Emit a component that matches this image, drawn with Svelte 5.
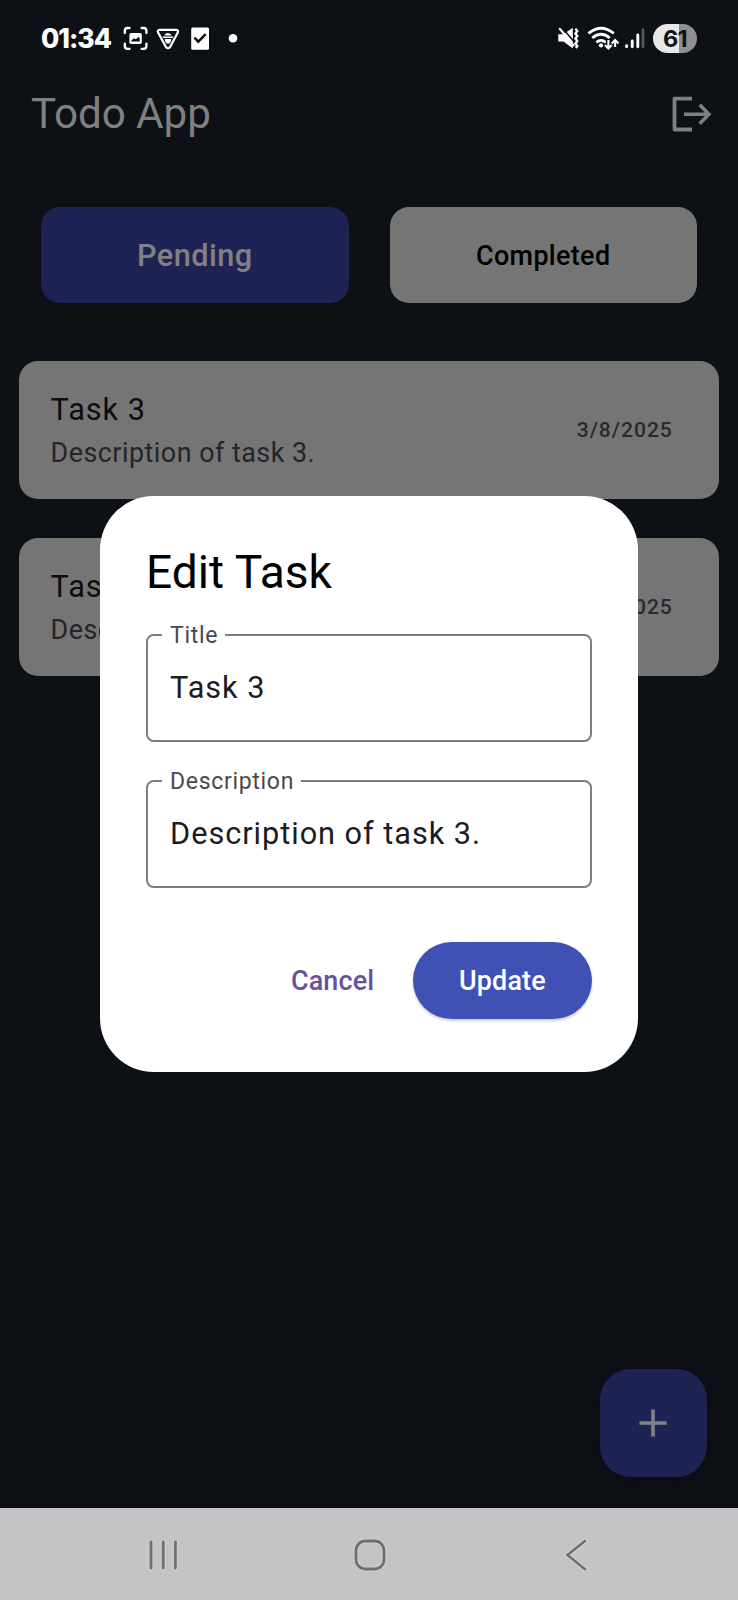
<script>
  const tasks = [
    { title: 'Task 3', description: 'Description of task 3.', date: '3/8/2025' },
    { title: 'Task 2', description: 'Description of task 2.', date: '3/8/2025' }
  ];
  const fields = [
    { label: 'Title', value: 'Task 3' },
    { label: 'Description', value: 'Description of task 3.' }
  ];
</script>

<div class="screen">
  <div class="status">
    <span class="clock">01:34</span>
    <svg class="notif" width="130" height="36" viewBox="120 20 130 36" fill="none" stroke="#fff">
      <path stroke-width="2.3" stroke-linecap="round" d="M124.8 33v-2.2a2.8 2.8 0 0 1 2.8-2.8h2M141.6 28h2a2.8 2.8 0 0 1 2.8 2.8V33M146.4 43.6v2.4a2.8 2.8 0 0 1-2.8 2.8h-2M129.6 48.8h-2a2.8 2.8 0 0 1-2.8-2.8v-2.4" />
      <rect x="129.4" y="33" width="12.4" height="11" rx="1.8" fill="#fff" stroke="none" />
      <path d="M131.4 41.4v-1.2l2.6-2 1.8 1.1 2.6-2.2 1.3 1.2v3.1z" fill="#0d1016" stroke="none" />
      <path stroke-width="2.2" stroke-linejoin="round" d="M159.6 29.8h16.6q2.6.2 1.6 2.7l-7.7 14.6q-2.1 2.3-4.2 0l-7.8-14.6q-1-2.5 1.5-2.7z" />
      <path d="M164.2 35.6q.8-2.4 3.7-2.6 3 .2 3.8 2.6zM162.8 36.6h10.4v1.4h-10.4zM164.6 39h6.8l-.9 3.2q-2.5 3-5 0z" fill="#fff" stroke="none" />
      <rect x="191.2" y="27.4" width="17.8" height="22.4" rx="1.6" fill="#fff" stroke="none" />
      <path stroke="#0d1016" stroke-width="2.5" d="M194.4 37.6l3.9 4 7.4-7.5" />
      <circle cx="233" cy="38.3" r="4.3" fill="#fff" stroke="none" />
    </svg>
    <svg class="radio" width="92" height="36" viewBox="554 20 92 36" fill="none" stroke="#fff">
      <path d="M558.3 34.2h5.2l9.3-6.4v20.6l-9.3-6.8h-5.2z" fill="#fff" stroke="none" />
      <path stroke="#0d1016" stroke-width="1.5" d="M561.8 27.2l13.6 16" />
      <path stroke-width="2.2" stroke-linecap="round" d="M559.8 28.8l13.8 16.6" />
      <path stroke-width="2.3" d="M575.4 28.6l1.9 2.4-1.9 2.5 1.9 2.5-1.9 2.5 1.9 2.5-1.9 2.5 1.9 2.5-1.4 2" />
      <path stroke-width="2.8" d="M588.4 33.4q12.8-10.4 25.4 0M592.3 38q8.8-7.4 17.4 0M596.4 42.4q4.7-4 9.3 0" />
      <circle cx="601" cy="45.4" r="2.1" fill="#fff" stroke="none" />
      <path stroke="#0d1016" stroke-width="4.5" d="M608.4 39.8v7M615.4 38.6v7" />
      <path stroke-width="2.1" d="M608.4 40v7.6M605 45l3.4 3.4 3.4-3.4M615.1 47v-7.2M611.7 43.4l3.4-3.4 3.4 3.4" />
      <path stroke-width="2.9" stroke-linecap="round" d="M626.6 45.6v1.2M632.2 41v5.8M637.8 35v11.8" />
      <path stroke="#55585d" stroke-width="2.7" stroke-linecap="round" d="M643 29.6v17.2" />
    </svg>
    <span class="battery">61</span>
  </div>

  <header>
    <h1>Todo App</h1>
    <svg width="46" height="46" viewBox="668 91 46 46" fill="none" stroke="#7f7f80">
      <path stroke-width="3.8" stroke-linejoin="round" d="M692 98.7h-17.5v30.8H692" />
      <path stroke-width="3.6" d="M684 114.3h24.5M699.7 104.8l9.2 9.5-9.2 9.4" />
    </svg>
  </header>

  <div class="tabs">
    <button class="tab active">Pending</button>
    <button class="tab">Completed</button>
  </div>

  <div class="list">
    {#each tasks as task}
      <article>
        <div>
          <div class="name">{task.title}</div>
          <div class="desc">{task.description}</div>
        </div>
        <time>{task.date}</time>
      </article>
    {/each}
  </div>

  <button class="fab" aria-label="Add">
    <svg width="28" height="28" viewBox="0 0 28 28" stroke="#828285" stroke-width="3.6"><path d="M14 .5v27M.5 14h27" /></svg>
  </button>

  <nav>
    <svg width="34" height="34" viewBox="0 0 34 34" fill="none" stroke-linecap="round">
      <path stroke="#d0d0d2" stroke-width="5" d="M5 4v26M17.2 4v26M29.4 4v26" />
      <path stroke="#6f6f72" stroke-width="2.8" d="M5 4v26M17.2 4v26M29.4 4v26" />
    </svg>
    <svg width="34" height="34" viewBox="0 0 34 34" fill="none">
      <rect x="3" y="3" width="28" height="28" rx="9.4" stroke="#d0d0d2" stroke-width="5" />
      <rect x="3" y="3" width="28" height="28" rx="9.4" stroke="#6f6f72" stroke-width="2.8" />
    </svg>
    <svg width="34" height="34" viewBox="0 0 34 34" fill="none" stroke-linecap="round">
      <path stroke="#d0d0d2" stroke-width="5" d="M26 3L8.5 17 26 31.2" />
      <path stroke="#6f6f72" stroke-width="2.5" d="M26 3L8.5 17 26 31.2" />
    </svg>
  </nav>

  <div class="overlay">
    <div class="dialog">
      <h2>Edit Task</h2>
      <div class="fields">
        {#each fields as field}
          <div class="field">
            <span class="label">{field.label}</span>
            <span class="value">{field.value}</span>
          </div>
        {/each}
      </div>
      <div class="actions">
        <button class="cancel">Cancel</button>
        <button class="update">Update</button>
      </div>
    </div>
  </div>
</div>

<style>
  :global(body) { margin: 0; background: #0d1015; }
  * { box-sizing: border-box; }
  .screen {
    position: relative;
    width: 738px;
    height: 1600px;
    display: flex;
    flex-direction: column;
    background: #0d1015;
    font-family: Roboto, sans-serif;
    overflow: hidden;
  }
  svg { display: block; flex: none; }
  button { border: 0; padding: 0; font-family: inherit; font-weight: 500; }
  h1, h2 { margin: 0; font-weight: 400; }
  .status {
    height: 60px;
    padding: 20px 41px 4px 41px;
    display: flex;
    align-items: flex-start;
    color: #fff;
  }
  .clock {
    width: 79px;
    font: 800 26.5px/37px Inter, sans-serif;
    letter-spacing: -1px;
    white-space: nowrap;
  }
  .radio { margin-left: auto; }
  .battery {
    width: 44px;
    height: 29px;
    margin: 4px 0 0 7px;
    border-radius: 15px;
    background: linear-gradient(90deg, #e8e8e9 0 60%, #8f8f91 60%);
    color: #101216;
    font: 700 23.5px/29px Inter, sans-serif;
    letter-spacing: -0.8px;
    text-align: center;
  }
  header {
    height: 107.6px;
    padding: 0 24px 0 31px;
    display: flex;
    align-items: center;
    justify-content: space-between;
  }
  h1 { font-size: 42.2px; line-height: 54px; letter-spacing: -0.08px; color: #7f8081; }
  .tabs {
    display: grid;
    grid-template-columns: 1fr 1fr;
    gap: 41px;
    padding: 39px 41px 0;
  }
  .tab {
    height: 96.4px;
    padding-top: 2px;
    border-radius: 19.2px;
    background: #757575;
    color: #000;
    font-size: 26.9px;
    letter-spacing: 0.35px;
  }
  .tab.active { background: #1f2354; color: #818184; font-size: 30.7px; letter-spacing: 0.45px; }
  .list {
    display: flex;
    flex-direction: column;
    gap: 38.6px;
    padding: 58px 19.2px 0;
  }
  article {
    height: 138.3px;
    padding: 0 46px 0 31.4px;
    display: flex;
    align-items: center;
    justify-content: space-between;
    border-radius: 19.2px;
    background: #757575;
  }
  .name { font-size: 30.7px; line-height: 46px; letter-spacing: 0.96px; color: #0d0d0e; }
  .desc { font-size: 26.9px; line-height: 40px; letter-spacing: 0.48px; color: #252428; }
  time { margin-top: -1px; font-size: 21.1px; font-weight: 500; letter-spacing: 0.96px; color: #2a292d; }
  .fab {
    width: 107.6px;
    height: 107.6px;
    margin: auto 30.9px 31px auto;
    display: grid;
    place-items: center;
    border-radius: 30.7px;
    background: #1f2354;
    box-shadow: 0 3px 8px #0b0e12;
  }
  nav {
    height: 92px;
    display: flex;
    justify-content: space-between;
    padding: 30px 145px 0 146px;
    background: #c4c4c6;
  }
  .overlay {
    position: absolute;
    inset: 60px 0 92px;
    display: flex;
    align-items: center;
    justify-content: center;
  }
  .dialog {
    width: 538px;
    padding: 46.1px 46.1px 53.8px;
    border-radius: 53.8px;
    background: #fff;
  }
  h2 { font-size: 46.1px; line-height: 61.5px; color: #000; }
  .fields { display: flex; flex-direction: column; gap: 38.4px; margin-top: 31px; }
  .field {
    position: relative;
    height: 107.5px;
    display: flex;
    align-items: center;
    padding: 0 22px 1px;
    border: 2px solid #7e7d81;
    border-radius: 7.7px;
  }
  .label {
    position: absolute;
    top: -14.4px;
    left: 14px;
    padding: 0 7px 0 8px;
    background: #fff;
    font-size: 23px;
    line-height: 28px;
    letter-spacing: 0.68px;
    color: #4a484f;
  }
  .value { font-size: 30.7px; letter-spacing: 0.96px; color: #1c1b1f; }
  .actions { display: flex; justify-content: flex-end; gap: 16px; margin-top: 54px; }
  .cancel, .update { height: 77px; font-size: 26.9px; letter-spacing: 0.19px; border-radius: 38.5px; }
  .cancel { padding: 2px 22.5px 0; background: none; color: #65529f; }
  .update { padding: 2px 46.1px 0; background: #3f51b5; color: #fff; box-shadow: 0 2px 3px #0003; }
</style>
